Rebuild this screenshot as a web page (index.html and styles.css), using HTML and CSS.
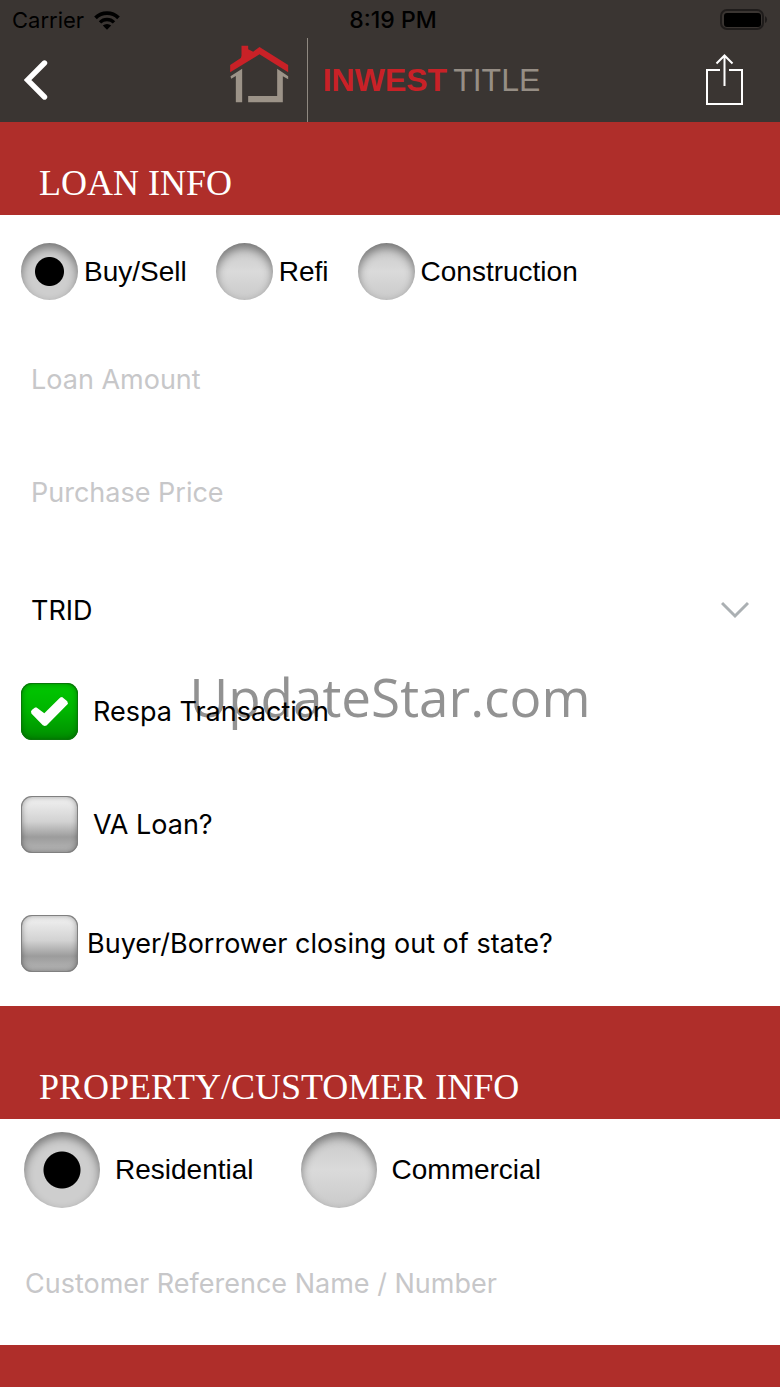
FILE: index.html
```html
<!DOCTYPE html>
<html lang="en">
<head>
  <meta charset="UTF-8" />
  <meta name="viewport" content="width=device-width, initial-scale=1.0"/>
  <title>Inwest Title</title>
  <link rel="stylesheet" href="styles.css">
</head>
<body>
  <header class="header">
    <div class="status-bar">
      <div class="carrier">
        Carrier
        <svg class="wifi" viewBox="0 0 26 19" aria-hidden="true">
          <path d="M1.5 6.8 A16.5 16.5 0 0 1 24.5 6.8" fill="none" stroke="#000" stroke-width="3.8"/>
          <path d="M6 11.4 A10 10 0 0 1 20 11.4" fill="none" stroke="#000" stroke-width="3.4"/>
          <path d="M13 18.8 L8.8 14.6 A6 6 0 0 1 17.2 14.6 Z"/>
        </svg>
      </div>
      <div class="time">8:19 PM</div>
      <svg class="battery" viewBox="0 0 48 22" aria-hidden="true">
        <rect x="1" y="1" width="42" height="19" rx="6" fill="none" stroke="#1f1c1b" stroke-width="2"/>
        <rect x="4" y="4" width="37" height="14" rx="3"/>
        <path d="M45 7 a4 4 0 0 1 0 7 z" fill="#1f1c1b"/>
      </svg>
    </div>
    <nav class="nav-bar">
      <button class="icon-btn back-btn" type="button" aria-label="Back">
        <svg width="24" height="40" viewBox="0 0 24 40">
          <path d="M20.5 3 L3.5 20 L20.5 37" fill="none" stroke="#fff" stroke-width="5.4" stroke-linecap="round" stroke-linejoin="miter"/>
        </svg>
      </button>
      <div class="brand">
        <svg class="house" viewBox="30 134 176 174" aria-hidden="true">
          <path fill="#c92127" d="M30 194 L62 173 L64 166 V136 H84 V147 L99 154 L118 140 L204 194 V216 L118 162 L30 216 Z"/>
          <path fill="#9c9388" d="M31 228 L66 205 V306 H47 V227 L33 235 Z"/>
          <path fill="#9c9388" d="M84 287 H171 V205 L204 228 V237 L188 228 V306 H84 Z"/>
        </svg>
        <div class="brand-name"><strong>INWEST</strong><span>TITLE</span></div>
      </div>
      <button class="icon-btn share-btn" type="button" aria-label="Share">
        <svg width="38" height="52" viewBox="0 0 38 52">
          <path d="M14 16 H1 V50 H36 V16 H23 M18.5 32 V2 M10.5 9.5 L18.5 1.5 L26.5 9.5" fill="none" stroke="#fff" stroke-width="2"/>
        </svg>
      </button>
    </nav>
  </header>

  <form class="form">
    <h2 class="section-title first">LOAN INFO</h2>
    <div class="radio-row">
      <label class="radio"><input type="radio" name="loanType" checked>Buy/Sell</label>
      <label class="radio"><input type="radio" name="loanType">Refi</label>
      <label class="radio"><input type="radio" name="loanType">Construction</label>
    </div>
    <input class="field" type="text" placeholder="Loan Amount" aria-label="Loan Amount">
    <input class="field" type="text" placeholder="Purchase Price" aria-label="Purchase Price">
    <div class="select-row">
      <select aria-label="Disclosure type">
        <option>TRID</option>
      </select>
      <svg width="28" height="18" viewBox="0 0 28 18" aria-hidden="true">
        <path d="M1 2 L14 15 L27 2" fill="none" stroke="#abb0b3" stroke-width="3"/>
      </svg>
    </div>
    <div class="checks">
      <label class="check"><input type="checkbox" checked><span>Respa Transaction</span></label>
      <label class="check"><input type="checkbox"><span>VA Loan?</span></label>
      <label class="check wide"><input type="checkbox"><span>Buyer/Borrower closing out of state?</span></label>
      <div class="watermark">UpdateStar.com</div>
    </div>

    <h2 class="section-title">PROPERTY/CUSTOMER INFO</h2>
    <div class="radio-row large">
      <label class="radio"><input type="radio" name="propertyType" checked>Residential</label>
      <label class="radio"><input type="radio" name="propertyType">Commercial</label>
    </div>
    <input class="field reference" type="text" placeholder="Customer Reference Name / Number" aria-label="Customer Reference Name / Number">
    <div class="section-end"></div>
  </form>
</body>
</html>
```
FILE: styles.css
```css
* {
  box-sizing: border-box;
}
body {
  margin: 0;
  min-height: 100vh;
  display: flex;
  flex-direction: column;
  font-family: Inter, "Liberation Sans", sans-serif;
  font-size: 27px;
  color: #000;
  background: #fff;
}

/* header */
.header {
  background: #3a3532;
}
.status-bar {
  display: grid;
  grid-template-columns: 1fr auto 1fr;
  align-items: center;
  height: 38px;
  padding: 2px 12px 0;
  font-size: 22px;
}
.carrier {
  display: flex;
  align-items: center;
  gap: 10px;
}
.wifi {
  width: 26px;
  height: 19px;
}
.time {
  padding-left: 6px;
  font-size: 23px;
  font-weight: 500;
}
.battery {
  width: 48px;
  height: 22px;
  justify-self: end;
}
.nav-bar {
  display: grid;
  grid-template-columns: 1fr auto 1fr;
  align-items: center;
  height: 84px;
  padding: 0 36px 0 24px;
}
.icon-btn {
  display: flex;
  padding: 0;
  border: none;
  background: none;
  cursor: pointer;
}
.share-btn {
  justify-self: end;
}
.brand {
  display: flex;
  align-items: center;
  height: 84px;
  padding-left: 2px;
}
.house {
  width: 59px;
  height: 58px;
  margin: 0 18px 12px 0;
}
.brand-name {
  display: flex;
  align-items: center;
  gap: 6px;
  height: 84px;
  padding-left: 15px;
  border-left: 1px solid #8f8981;
  font-family: "Liberation Sans", Arial, sans-serif;
  font-size: 32px;
  color: #968e85;
}
.brand-name strong {
  color: #c92127;
}

/* form */
.form {
  flex: 1;
  display: flex;
  flex-direction: column;
}
.section-title {
  margin: 0;
  height: 113px;
  padding: 61px 39px 0;
  background: #af2e2a;
  color: #fff;
  font-family: "Liberation Serif", "Times New Roman", serif;
  font-size: 36px;
  font-weight: normal;
  line-height: 40px;
}
.section-title.first {
  height: 93px;
  padding-top: 41px;
}
.section-end {
  flex: 1;
  min-height: 42px;
  background: #af2e2a;
}
.radio-row {
  display: flex;
  gap: 29px;
  padding: 28px 21px 23px;
  font-family: "Liberation Sans", Arial, sans-serif;
  font-size: 28px;
}
.radio {
  display: flex;
  align-items: center;
  gap: 6px;
}
.radio input {
  appearance: none;
  width: 57px;
  height: 57px;
  margin: 0;
  border-radius: 50%;
  background: linear-gradient(#c8c8c8, #dadada 50%, #cacaca);
  box-shadow: inset 0 5px 10px rgba(0,0,0,0.42);
}
.radio input:checked {
  background: radial-gradient(circle, #000 14px, #cecece 15px);
}
.radio-row.large {
  gap: 47px;
  padding: 13px 24px 19px;
}
.large .radio {
  gap: 15px;
}
.large .radio input {
  width: 76px;
  height: 76px;
}
.large .radio input:checked {
  background: radial-gradient(circle, #000 18px, #cecece 19px);
}
.field {
  width: 100%;
  height: 113px;
  padding: 0 31px;
  border: none;
  outline: none;
  font: inherit;
  background: none;
}
.field::placeholder {
  color: #c7c7c9;
  opacity: 1;
}
.field.reference {
  padding: 0 25px;
  margin-bottom: 5px;
}
.select-row {
  display: flex;
  align-items: center;
  height: 106px;
  padding: 16px 31px 0;
}
.select-row select {
  appearance: none;
  flex: 1;
  padding: 0;
  border: none;
  background: none;
  font: inherit;
  color: inherit;
}

/* checkboxes */
.checks {
  position: relative;
}
.check {
  display: flex;
  align-items: center;
  gap: 15px;
  height: 113px;
  padding: 0 21px;
}
.check.wide {
  gap: 9px;
  height: 125px;
}
.check span {
  position: relative;
  z-index: 1;
}
.check input {
  appearance: none;
  display: grid;
  place-items: center;
  width: 57px;
  height: 57px;
  margin: 0;
  border-radius: 11px;
  background: linear-gradient(#f4f4f4, #d2d2d2 45%, #9c9c9c 72%, #b8b8b8);
  box-shadow: inset 0 0 0 1px #808080, inset 0 0 6px rgba(0,0,0,0.45);
}
.check input:checked {
  background: linear-gradient(#00c800, #00b400 50%, #008c00);
  box-shadow: inset 0 0 0 1px #087808, inset 0 0 6px rgba(0,60,0,0.6);
}
.check input:checked::before {
  content: "";
  width: 37px;
  height: 29px;
  background: #fff;
  clip-path: polygon(0 49%, 3% 44%, 11% 36%, 15% 36%, 36% 56%, 79% 2%, 84% 0, 98% 15%, 100% 23%, 42% 98%, 37% 100%, 32% 97%, 1% 57%);
}
.watermark {
  position: absolute;
  top: 5px;
  left: 0;
  right: 0;
  text-align: center;
  font-family: "Open Sans", "Noto Sans", sans-serif;
  font-size: 53px;
  color: #929292;
  pointer-events: none;
}
```
